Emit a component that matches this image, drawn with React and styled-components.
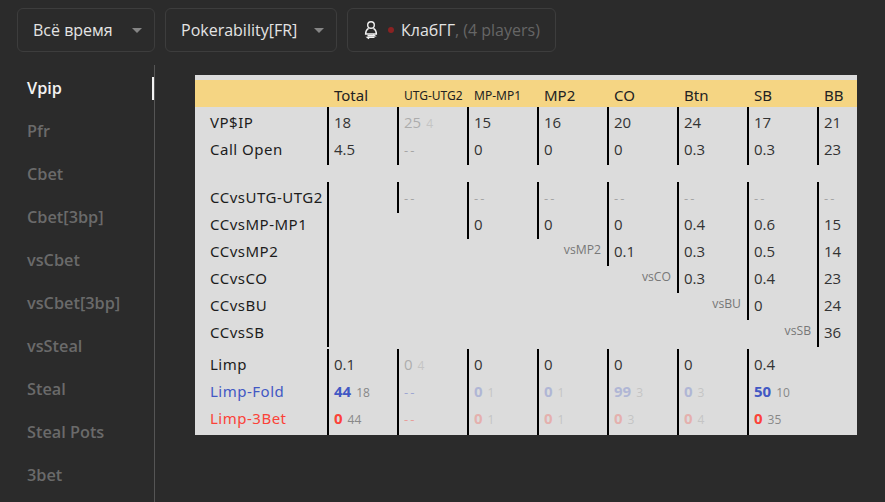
import React from "react";
import styled, { createGlobalStyle } from "styled-components";

const GlobalStyle = createGlobalStyle`
  html, body {
    margin: 0;
    background: #2b2b2b;
    font-family: "Open Sans", "Noto Sans", sans-serif;
  }
`;

const Page = styled.div`
  width: 885px;
  height: 502px;
  overflow: hidden;
  display: flex;
  flex-direction: column;
`;

const Toolbar = styled.div`
  display: flex;
  gap: 10px;
  padding: 8px 17px 13px;
`;

const Select = styled.div`
  box-sizing: border-box;
  height: 44px;
  width: ${(p) => p.$width}px;
  display: flex;
  align-items: center;
  padding: 0 12px 0 15px;
  border: 1px solid #3d3d3d;
  border-radius: 6px;
  color: #e4e4e4;
  font-size: 16px;
`;

const SelectLabel = styled.span`
  flex: 1;
  white-space: nowrap;
`;

const Caret = styled.i`
  width: 0;
  height: 0;
  border-left: 5px solid transparent;
  border-right: 5px solid transparent;
  border-top: 5px solid #858585;
`;

const ClubIcon = styled.svg`
  width: 14px;
  height: 20px;
  margin: 0 10px 0 1px;
  flex: none;
`;

const Dot = styled.i`
  width: 6px;
  height: 6px;
  border-radius: 50%;
  background: #8a2222;
  margin-right: 7px;
  flex: none;
`;

const Muted = styled.span`
  color: #666;
`;

const Body = styled.div`
  flex: 1;
  display: flex;
  min-height: 0;
`;

const Sidebar = styled.nav`
  box-sizing: border-box;
  width: 155px;
  flex: none;
  border-right: 1px solid #555;
  padding-top: 2px;
`;

const SideItem = styled.div`
  position: relative;
  height: 43px;
  line-height: 43px;
  padding-left: 27px;
  font-size: 16.3px;
  font-weight: 600;
  color: ${(p) => (p.$active ? "#f2f2f2" : "#6a6a6a")};

  ${(p) =>
    p.$active &&
    `&::after {
      content: "";
      position: absolute;
      right: 0;
      top: 10px;
      width: 2px;
      height: 23px;
      background: #f2f2f2;
    }`}
`;

const Content = styled.main`
  padding: 10px 0 0 40px;
`;

const Table = styled.div`
  width: 662px;
  background: #dcdcdc;
  padding: 5px 0;
  color: #222;
  font-size: 15px;
`;

const Row = styled.div`
  display: grid;
  grid-template-columns: 132px repeat(7, 70px) 40px;
  height: 27px;
  line-height: 30px;
  white-space: nowrap;
  margin-top: ${(p) => p.$gap || 0}px;
`;

const HeadRow = styled(Row)`
  background: #f5d583;
`;

const HeadCell = styled.div`
  padding-left: 7px;
  font-family: "Noto Sans", sans-serif;
  font-size: ${(p) => (p.$small ? "12px" : "15px")};
  line-height: 31px;
`;

const RowLabel = styled.div`
  padding-left: 15px;
  font-family: "Noto Sans", sans-serif;
  letter-spacing: 0.5px;
  color: ${(p) => p.$color || "#1c1c1c"};
`;

const Cell = styled.div`
  box-sizing: border-box;
  padding-left: 5px;
  border-left: 2px solid #000;
  grid-column: span ${(p) => p.$span || 1};
  color: #333;
`;

const VsCell = styled(Cell)`
  text-align: right;
  padding-right: 6px;
  font-size: 12.2px;
  line-height: 28px;
  color: #777;
`;

const Value = styled.span`
  opacity: ${(p) => (p.$dim ? 0.28 : 1)};
  color: ${(p) => p.$color || "inherit"};
  font-weight: ${(p) => (p.$color ? 700 : 400)};
`;

const Sub = styled.small`
  font-size: 12px;
  color: #888;
  margin-left: 5px;
  font-weight: 400;
`;

const Dash = styled.span`
  opacity: 0.4;
  color: ${(p) => p.$color || "#555"};
  letter-spacing: 2px;
  font-size: 13px;
`;

const BLUE = "#4258c4";
const RED = "#fb4238";

const menu = ["Vpip", "Pfr", "Cbet", "Cbet[3bp]", "vsCbet", "vsCbet[3bp]", "vsSteal", "Steal", "Steal Pots", "3bet"];

const heads = [
  ["Total"],
  ["UTG-UTG2", true],
  ["MP-MP1", true],
  ["MP2"],
  ["CO"],
  ["Btn"],
  ["SB"],
  ["BB"],
];

// value, sub number, dimmed
const Stat = ({ v, sub, dim, color }) => {
  if (v === "--") return <Dash $color={color}>--</Dash>;
  return (
    <Value $dim={dim} $color={color}>
      {v}
      {sub && <Sub>{sub}</Sub>}
    </Value>
  );
};

const StatRow = ({ label, cells, color, gap }) => (
  <Row $gap={gap}>
    <RowLabel $color={color}>{label}</RowLabel>
    {cells.map((c, i) => (
      <Cell key={i}>
        <Stat color={color} {...c} />
      </Cell>
    ))}
  </Row>
);

const n = (v, sub, dim) => ({ v, sub, dim });
const dash = { v: "--" };

// row of the CCvs block: how many columns stay empty, and the "vs" caption
const CcRow = ({ label, empty, vs, values, gap }) => (
  <Row $gap={gap}>
    <RowLabel>{label}</RowLabel>
    {vs ? (
      <VsCell $span={empty}>{vs}</VsCell>
    ) : (
      <Cell $span={empty} />
    )}
    {values.map((v, i) => (
      <Cell key={i}>{v === "--" ? <Dash>--</Dash> : v}</Cell>
    ))}
  </Row>
);

export default function App() {
  return (
    <Page>
      <GlobalStyle />
      <Toolbar>
        <Select $width={138}>
          <SelectLabel>Всё время</SelectLabel>
          <Caret />
        </Select>
        <Select $width={172}>
          <SelectLabel>Pokerability[FR]</SelectLabel>
          <Caret />
        </Select>
        <Select $width={209}>
          <ClubIcon viewBox="0 0 14 20" fill="none" stroke="#f2f2f2" strokeWidth="1.4">
            <circle cx="7" cy="5" r="3.3" />
            <path d="M4.6 8.4C2.8 9.4 1.6 11.2 1.6 14H12.4C12.4 11.2 11.2 9.4 9.4 8.4" />
            <path d="M3.5 15.8H10.6L9 14.6M10.5 17.4H3.4L5 18.8" />
          </ClubIcon>
          <Dot />
          <span>
            КлабГГ<Muted>, (4 players)</Muted>
          </span>
        </Select>
      </Toolbar>
      <Body>
        <Sidebar>
          {menu.map((m, i) => (
            <SideItem key={m} $active={i === 0}>
              {m}
            </SideItem>
          ))}
        </Sidebar>
        <Content>
          <Table>
            <HeadRow>
              <div />
              {heads.map(([h, small]) => (
                <HeadCell key={h} $small={small}>
                  {h}
                </HeadCell>
              ))}
            </HeadRow>
            <StatRow
              label="VP$IP"
              cells={[n("18"), n("25", "4", true), n("15"), n("16"), n("20"), n("24"), n("17"), n("21")]}
            />
            <StatRow
              label="Call Open"
              cells={[n("4.5"), dash, n("0"), n("0"), n("0"), n("0.3"), n("0.3"), n("23")]}
            />
            <CcRow gap={21} label="CCvsUTG-UTG2" empty={1} values={["--", "--", "--", "--", "--", "--", "--"]} />
            <CcRow label="CCvsMP-MP1" empty={2} values={["0", "0", "0", "0.4", "0.6", "15"]} />
            <CcRow label="CCvsMP2" empty={4} vs="vsMP2" values={["0.1", "0.3", "0.5", "14"]} />
            <CcRow label="CCvsCO" empty={5} vs="vsCO" values={["0.3", "0.4", "23"]} />
            <CcRow label="CCvsBU" empty={6} vs="vsBU" values={["0", "24"]} />
            <CcRow label="CCvsSB" empty={7} vs="vsSB" values={["36"]} />
            <StatRow
              gap={5}
              label="Limp"
              cells={[n("0.1"), n("0", "4", true), n("0"), n("0"), n("0"), n("0"), n("0.4")]}
            />
            <StatRow
              label="Limp-Fold"
              color={BLUE}
              cells={[
                n("44", "18"),
                dash,
                n("0", "1", true),
                n("0", "1", true),
                n("99", "3", true),
                n("0", "3", true),
                n("50", "10"),
              ]}
            />
            <StatRow
              label="Limp-3Bet"
              color={RED}
              cells={[
                n("0", "44"),
                dash,
                n("0", "1", true),
                n("0", "1", true),
                n("0", "3", true),
                n("0", "4", true),
                n("0", "35"),
              ]}
            />
          </Table>
        </Content>
      </Body>
    </Page>
  );
}
